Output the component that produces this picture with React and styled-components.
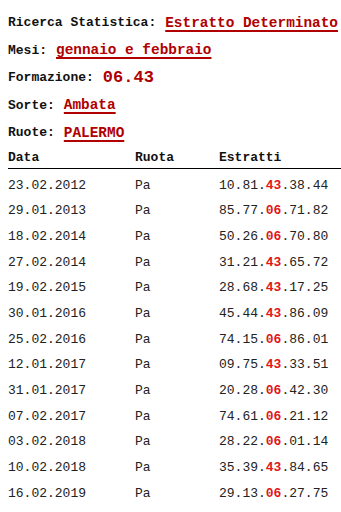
import React from 'react'
import styled, { createGlobalStyle } from 'styled-components'

const GlobalStyle = createGlobalStyle`
  body {
    margin: 0;
    background: #ffffff;
    font-family: "Liberation Mono", "Courier New", monospace;
    color: #1a1a1a;
  }
`;

const Page = styled.div`
  padding: 9px 0 0 8px;
`;

const Info = styled.div`
  display: flex;
  flex-direction: column;
`;

const Line = styled.div`
  height: 27.5px;
  display: flex;
  align-items: center;
  gap: 9px;
  white-space: nowrap;
`;

const Label = styled.span`
  font-weight: 700;
  font-size: 13px;
  color: #111;
`;

const Value = styled.span`
  font-weight: 700;
  font-size: ${p => (p.big ? '17px' : '14.4px')};
  color: #b00000;
  text-decoration: ${p => (p.big ? 'none' : 'underline')};
  text-decoration-thickness: 1.5px;
  text-underline-offset: 3px;
`;

const Table = styled.div`
  margin-top: 1px;
`;

const Row = styled.div`
  display: grid;
  grid-template-columns: 127px 84px 1fr;
  align-items: center;
  height: ${p => (p.head ? '20px' : '25.67px')};
  font-size: 13px;
  font-weight: ${p => (p.head ? 700 : 400)};
  color: ${p => (p.head ? '#111' : '#222')};
  border-bottom: ${p => (p.head ? '1.5px solid #000' : 'none')};
  margin-bottom: ${p => (p.head ? '4px' : '0')};
`;

const Hit = styled.b`
  color: #e01818;
`;

const rows = [
  ['23.02.2012', '10.81.', '43', '.38.44'],
  ['29.01.2013', '85.77.', '06', '.71.82'],
  ['18.02.2014', '50.26.', '06', '.70.80'],
  ['27.02.2014', '31.21.', '43', '.65.72'],
  ['19.02.2015', '28.68.', '43', '.17.25'],
  ['30.01.2016', '45.44.', '43', '.86.09'],
  ['25.02.2016', '74.15.', '06', '.86.01'],
  ['12.01.2017', '09.75.', '43', '.33.51'],
  ['31.01.2017', '20.28.', '06', '.42.30'],
  ['07.02.2017', '74.61.', '06', '.21.12'],
  ['03.02.2018', '28.22.', '06', '.01.14'],
  ['10.02.2018', '35.39.', '43', '.84.65'],
  ['16.02.2019', '29.13.', '06', '.27.75'],
]

const App = () => {
  return (
    <Page>
      <GlobalStyle />
      <Info>
        <Line>
          <Label>Ricerca Statistica:</Label>
          <Value>Estratto Determinato</Value>
        </Line>
        <Line>
          <Label>Mesi:</Label>
          <Value>gennaio e febbraio</Value>
        </Line>
        <Line>
          <Label>Formazione:</Label>
          <Value big>06.43</Value>
        </Line>
        <Line>
          <Label>Sorte:</Label>
          <Value>Ambata</Value>
        </Line>
        <Line>
          <Label>Ruote:</Label>
          <Value>PALERMO</Value>
        </Line>
      </Info>
      <Table>
        <Row head>
          <span>Data</span>
          <span>Ruota</span>
          <span>Estratti</span>
        </Row>
        {rows.map(r => (
          <Row key={r[0]}>
            <span>{r[0]}</span>
            <span>Pa</span>
            <span>
              {r[1]}
              <Hit>{r[2]}</Hit>
              {r[3]}
            </span>
          </Row>
        ))}
      </Table>
    </Page>
  )
}

export default App
